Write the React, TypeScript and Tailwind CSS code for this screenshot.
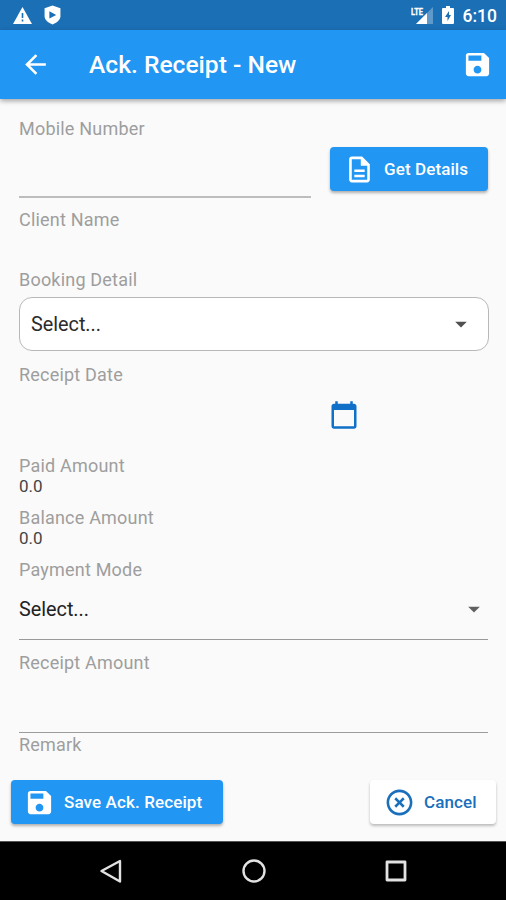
import React from 'react';

const paths = {
  back: 'M20 11H7.83l5.59-5.59L12 4l-8 8 8 8 1.41-1.41L7.83 13H20v-2z',
  save: 'M17 3H5c-1.11 0-2 .9-2 2v14c0 1.1.89 2 2 2h14c1.1 0 2-.9 2-2V7l-4-4zm-5 16c-1.66 0-3-1.34-3-3s1.34-3 3-3 3 1.34 3 3-1.34 3-3 3zm3-10H5V5h10v4z',
  description:
    'M8 16h8v2H8zm0-4h8v2H8zm6-10H6c-1.1 0-2 .9-2 2v16c0 1.1.89 2 1.99 2H18c1.1 0 2-.9 2-2V8l-6-6zm4 18H6V4h7v5h5v11z',
  calendar:
    'M20 3h-1V1h-2v2H7V1H5v2H4c-1.1 0-2 .9-2 2v16c0 1.1.9 2 2 2h16c1.1 0 2-.9 2-2V5c0-1.1-.9-2-2-2zm0 18H4V8h16v13z',
  cancel:
    'M14.59 8L12 10.59 9.41 8 8 9.41 10.59 12 8 14.59 9.41 16 12 13.41 14.59 16 16 14.59 13.41 12 16 9.41 14.59 8zM12 2C6.47 2 2 6.47 2 12s4.47 10 10 10 10-4.47 10-10S17.53 2 12 2zm0 18c-4.41 0-8-3.59-8-8s3.59-8 8-8 8 3.59 8 8-3.59 8-8 8z',
  dropdown: 'M7 10l5 5 5-5z',
};

function Icon({ name, className = 'size-[31px]' }: { name: keyof typeof paths; className?: string }) {
  return (
    <svg viewBox="0 0 24 24" fill="currentColor" className={`shrink-0 ${className}`}>
      <path d={paths[name]} />
    </svg>
  );
}

function Label({ children }: { children: React.ReactNode }) {
  return <div className="h-5 text-[18px] leading-[21px] tracking-[0.2px] text-[#9e9e9e]">{children}</div>;
}

function Value({ children }: { children: React.ReactNode }) {
  return <div className="mt-px mb-px h-5 text-[17px] leading-5 text-[#454545]">{children}</div>;
}

function StatusBar() {
  return (
    <div className="flex h-[30px] items-center bg-[#1b6fb5] pr-[9px] pl-[13px] text-white">
      <svg viewBox="0 0 19 17" className="h-[17px] w-[19px]">
        <path d="M9.5 0L19 17H0z" fill="currentColor" />
        <path d="M8.7 6h1.6v5H8.7zM8.7 12.6h1.6v1.8H8.7z" fill="#1b6fb5" />
      </svg>
      <svg viewBox="0 0 18 20" className="ml-3 h-5 w-[17px]">
        <path d="M9 0l8.4 2.8v8.4c0 4-4.2 7-8.4 8.8-4.2-1.8-8.4-4.8-8.4-8.8V2.8z" fill="currentColor" />
        <path d="M5.7 6l7.2 4-7.2 3.8z" fill="#1b6fb5" />
      </svg>
      <svg viewBox="0 0 24 19" className="ml-auto h-[19px] w-6">
        <path d="M22 1v17H5z" fill="#fff" fillOpacity=".3" />
        <path d="M16 7v11H5z" fill="#fff" />
        <text x="0" y="8.5" fontSize="9.5" fontWeight="700" textLength="12" lengthAdjust="spacingAndGlyphs" fill="#fff" stroke="#fff" strokeWidth="0.3">
          LTE
        </text>
      </svg>
      <svg viewBox="0 0 12 18" className="ml-[7px] h-[18px] w-3">
        <path d="M4 0h4v2h3q1 0 1 1v14q0 1-1 1H1q-1 0-1-1V3q0-1 1-1h3z" fill="currentColor" />
        <path d="M7 5L3 11h2.5v4L9 9H7z" fill="#1b6fb5" />
      </svg>
      <span className="ml-[9px] pt-[2px] text-[17.5px] leading-5 font-medium">6:10</span>
    </div>
  );
}

export default function App() {
  return (
    <div className="flex h-[900px] w-[506px] flex-col overflow-hidden bg-[#fafafa] font-['Roboto',sans-serif]">
      <StatusBar />

      {/* App bar */}
      <header className="z-10 flex h-[69px] shrink-0 items-center bg-[#2196f3] pr-[13px] pl-[20px] text-white shadow-[0_2px_5px_rgba(0,0,0,0.35)]">
        <Icon name="back" />
        <h1 className="ml-[38px] flex-1 pt-[2px] text-[24.6px] font-medium">Ack. Receipt - New</h1>
        <Icon name="save" />
      </header>

      <main className="flex min-h-0 flex-1 flex-col px-[19px] pt-[19px]">
        <div className="flex h-20 gap-[19px]">
          <div className="w-[292px] shrink-0 border-b-2 border-[#bdbdbd]">
            <Label>Mobile Number</Label>
          </div>
          <button className="mt-[29px] flex h-11 w-[158px] shrink-0 items-center rounded-[4px] bg-[#2196f3] pl-[14px] text-[17px] font-medium tracking-[0.1px] text-white shadow-[0_2px_3px_rgba(0,0,0,0.3)]">
            <Icon name="description" />
            <span className="ml-[9px] pt-[2px] whitespace-nowrap">Get Details</span>
          </button>
        </div>

        <div className="pt-[11px]">
          <Label>Client Name</Label>
        </div>

        <div className="pt-[40px]">
          <Label>Booking Detail</Label>
          <div className="mt-2 flex h-[54px] w-[470px] items-center justify-between rounded-[13px] border-[1.5px] border-[#b8b8b8] bg-white pr-[13px] pl-[11px]">
            <span className="pt-[2px] text-[19.8px] text-[#2b2b2b]">Select...</span>
            <Icon name="dropdown" className="size-[28px] text-[#505050]" />
          </div>
        </div>

        <div className="pt-[13px]">
          <Label>Receipt Date</Label>
          <div className="mt-4 flex h-[31px] justify-end pr-[128px]">
            <Icon name="calendar" className="size-[30px] text-[#1070c8]" />
          </div>
        </div>

        <div className="pt-6">
          <Label>Paid Amount</Label>
          <Value>0.0</Value>
        </div>
        <div className="pt-[10px]">
          <Label>Balance Amount</Label>
          <Value>0.0</Value>
        </div>

        <div className="pt-[10px]">
          <Label>Payment Mode</Label>
          <div className="flex h-[61px] w-[469px] items-center justify-between border-b border-[#9a9a9a]">
            <span className="pt-[2px] text-[19.8px] text-[#222]">Select...</span>
            <Icon name="dropdown" className="size-[28px] text-[#606060]" />
          </div>
        </div>

        <div className="h-[93px] w-[469px] border-b-[1.5px] border-[#9c9c9c] pt-[12px]">
          <Label>Receipt Amount</Label>
        </div>
        <div className="pt-[1px]">
          <Label>Remark</Label>
        </div>
      </main>

      {/* Bottom actions */}
      <div className="flex h-[61px] shrink-0 items-start justify-between pr-[10px] pl-[11px]">
        <button className="flex h-11 w-[212px] items-center rounded-[4px] bg-[#2196f3] pl-[13px] text-[17px] font-medium tracking-[0.12px] text-white shadow-[0_2px_3px_rgba(0,0,0,0.3)]">
          <Icon name="save" />
          <span className="ml-[9px] pt-[2px] whitespace-nowrap">Save Ack. Receipt</span>
        </button>
        <button className="flex h-11 w-[126px] items-center rounded-[4px] bg-white pl-[14px] text-[17px] font-medium tracking-[0.1px] text-[#1a6fbd] shadow-[0_2px_3px_rgba(0,0,0,0.25)]">
          <Icon name="cancel" />
          <span className="ml-[9px] pt-[2px]">Cancel</span>
        </button>
      </div>

      {/* System navigation */}
      <nav className="flex h-[59px] shrink-0 items-center justify-between border-t border-[#555] bg-black pr-[98px] pl-[99px] text-[#e2e2e2]">
        <svg viewBox="0 0 24 24" className="size-6" fill="none" stroke="currentColor" strokeWidth="2.4" strokeLinejoin="round">
          <path d="M21 2v20.5L2.5 12z" />
        </svg>
        <svg viewBox="0 0 24 24" className="size-6" fill="none" stroke="currentColor" strokeWidth="2.4">
          <circle cx="12" cy="12" r="10.5" />
        </svg>
        <svg viewBox="0 0 24 24" className="size-6" fill="none" stroke="currentColor" strokeWidth="2.8" strokeLinejoin="round">
          <path d="M3 3h18v18H3z" />
        </svg>
      </nav>
    </div>
  );
}
